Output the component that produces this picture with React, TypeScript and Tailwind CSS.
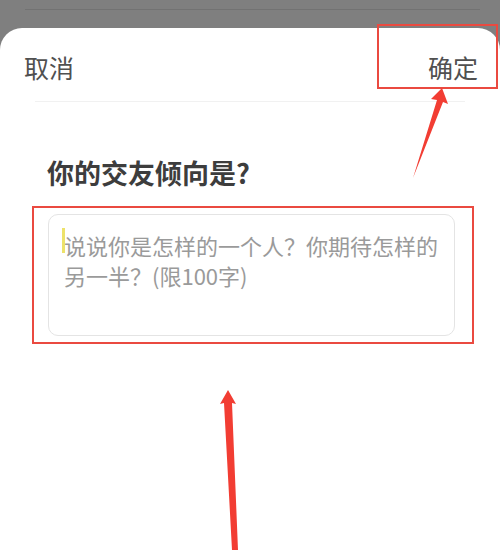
import React from "react";

export default function App() {
  const font = { fontFamily: '"Noto Sans CJK SC", "Noto Sans", sans-serif' };
  return (
    <div
      className="relative w-[500px] h-[550px] overflow-hidden bg-[#7f7f7f] flex flex-col"
      style={font}
    >
      {/* gray backdrop strip */}
      <div className="h-[28px] shrink-0 pt-[9px] pl-[25px] pr-[20px]">
        <div className="h-px bg-[#727272]" />
      </div>

      {/* white sheet */}
      <div className="flex-1 bg-white rounded-t-[22px] flex flex-col">
        <div className="h-[73px] shrink-0 flex items-start justify-between pt-[27px] pl-[24px] pr-[22px]">
          <span className="text-[25px] leading-[25px] text-[#505050]">取消</span>
          <span className="text-[25px] leading-[25px] text-[#505050]">确定</span>
        </div>
        <div className="h-px mx-[35px] bg-[#f1f1f1]" />

        <div className="mt-[57px] pl-[47px] text-[27px] leading-[28px] font-bold text-[#3d3d3d]">
          你的交友倾向是?
        </div>

        <div className="mt-[19px] ml-[32px] w-[442px] border-2 border-[#ea4a40] pl-[14px] pr-[17px] py-[6px]">
          <div className="relative h-[122px] rounded-[10px] border border-[#e4e4e4] pl-[15px] pr-[10px] pt-[15px] text-[22px] leading-[30px] text-[#9a9a9a]">
            <span className="absolute left-[13px] top-[13px] w-[3px] h-[25px] bg-[#ede26a]" />
            说说你是怎样的一个人？你期待怎样的另一半？(限100字)
          </div>
        </div>
      </div>

      {/* annotation box around 确定 */}
      <div className="absolute left-[377px] top-[24px] w-[121px] h-[65px] border-2 border-[#ea4a40]" />

      {/* annotation arrows */}
      <svg className="absolute inset-0 pointer-events-none" width="500" height="550" viewBox="0 0 500 550">
        <polygon
          points="442,88 448,104 443,102 413,178 437,100 431,99"
          fill="#f23d33"
        />
        <polygon
          points="228,390 236,404 232,403 238,550 232,550 224,403 220,404"
          fill="#f23d33"
        />
      </svg>
    </div>
  );
}
